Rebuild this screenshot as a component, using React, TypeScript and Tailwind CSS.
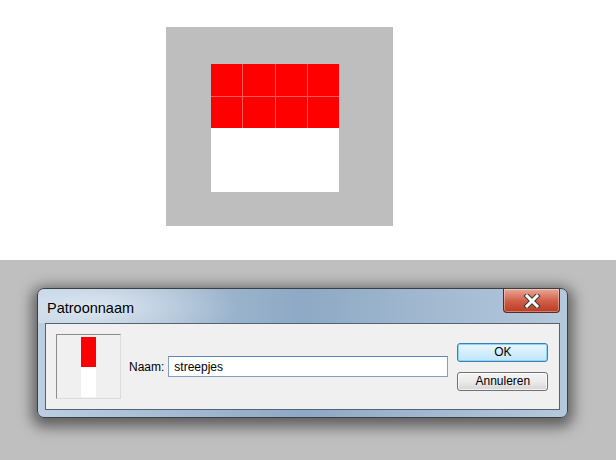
import React from 'react'

// Patroonnaam dialog over a pattern preview

const font = { fontFamily: '"Liberation Sans", Arial, sans-serif' }

const cells = [0, 1, 2, 3, 4, 5, 6, 7]

const PatternCanvas: React.FC = () => (
  <div className="h-[260px] bg-white pt-[27px] pl-[166px]">
    <div className="w-[227px] h-[199px] bg-[#bebebe] pt-[37px] pl-[45px]">
      <div className="w-[128px] h-[128px] bg-white">
        <div className="grid grid-cols-4 grid-rows-2 w-[128px] h-[64px] bg-[#ff5a5a] gap-px">
          {cells.map(i => (
            <div key={i} className="bg-[#ff0000]" />
          ))}
        </div>
      </div>
    </div>
  </div>
)

const CloseButton: React.FC = () => (
  <div className="w-[57px] h-[24px] mr-[7px] rounded-b-[4px] border border-t-0 border-[#5a2a22] bg-gradient-to-b from-[#e9a896] via-[#d2604a] to-[#b83a22] flex items-center justify-center shadow-[inset_0_0_0_1px_rgba(255,255,255,0.35)]">
    <svg width="18" height="14" viewBox="0 0 18 14">
      <path d="M4 2 L14 12 M14 2 L4 12" stroke="#3b3b3b" strokeWidth="5" strokeLinecap="square" />
      <path d="M4 2 L14 12 M14 2 L4 12" stroke="#ffffff" strokeWidth="3" strokeLinecap="square" />
    </svg>
  </div>
)

const Dialog: React.FC = () => (
  <div
    className="w-[531px] h-[130px] rounded-[7px] border border-[#3a3f45] bg-gradient-to-r from-[#bccfe2] via-[#8ea9c5] to-[#b6c9dc] shadow-[0_4px_14px_5px_rgba(0,0,0,0.5)] flex flex-col"
    style={font}
  >
    <div className="h-[34px] flex justify-between rounded-t-[6px] bg-[radial-gradient(ellipse_140px_40px_at_60px_18px,rgba(255,255,255,0.55),transparent)]">
      <div className="pl-[9px] pt-[9px] text-[14.5px] text-black">Patroonnaam</div>
      <CloseButton />
    </div>
    <div className="mx-[7px] h-[87px] border border-[#56626f] bg-[#f0f0f0] px-[10px] flex items-center">
      <div className="w-[65px] h-[65px] border border-t-[#8c8c8c] border-l-[#8c8c8c] border-r-[#dcdcdc] border-b-[#dcdcdc] flex items-center justify-center">
        <div className="w-[15px] h-[60px] flex flex-col">
          <div className="h-[30px] bg-[#ff0000]" />
          <div className="h-[30px] bg-white" />
        </div>
      </div>
      <span className="ml-[8px] text-[12px] text-black">Naam:</span>
      <div className="ml-[4px] w-[280px] h-[21px] border border-[#7f9fc4] border-t-[#5b86b8] bg-white flex items-center pl-[5px] text-[12px] text-black">
        streepjes
      </div>
      <div className="ml-[9px] flex flex-col gap-[10px]">
        <button className="w-[91px] h-[19px] rounded-[3px] border border-[#3c7fb1] bg-gradient-to-b from-[#eaf6fd] to-[#bee6fd] shadow-[inset_0_0_0_1px_#8fd3f7] text-[12px] text-black leading-none">
          OK
        </button>
        <button className="w-[91px] h-[19px] rounded-[3px] border border-[#707070] bg-gradient-to-b from-[#f4f4f4] via-[#ebebeb] to-[#d5d5d5] shadow-[inset_0_0_0_1px_rgba(255,255,255,0.7)] text-[12px] text-black leading-none">
          Annuleren
        </button>
      </div>
    </div>
  </div>
)

export default function App() {
  return (
    <div className="w-[616px] h-[460px] flex flex-col overflow-hidden">
      <PatternCanvas />
      <div className="flex-1 bg-[#bfbfbf] pt-[28px] pl-[37px]">
        <Dialog />
      </div>
    </div>
  )
}
